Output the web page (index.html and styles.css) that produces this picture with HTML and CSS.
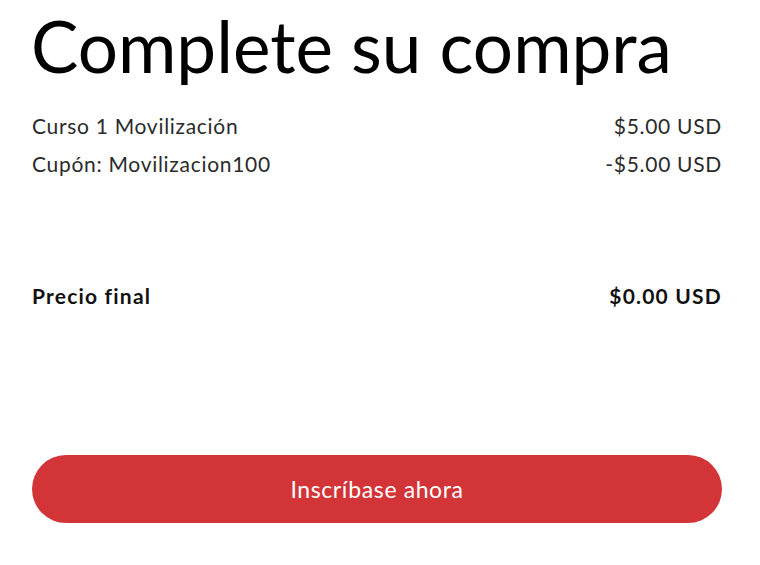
FILE: index.html
```html
<!DOCTYPE html>
<html lang="es">
<head>
<meta charset="utf-8">
<link rel="stylesheet" href="styles.css">
</head>
<body>
<main class="checkout">
  <h1 class="title">Complete su compra</h1>
  <div class="lines">
    <div class="row"><span>Curso 1 Movilización</span><span>$5.00 USD</span></div>
    <div class="row"><span>Cupón: Movilizacion100</span><span>-$5.00 USD</span></div>
  </div>
  <div class="row total"><span>Precio final</span><span>$0.00 USD</span></div>
  <button class="cta">Inscríbase ahora</button>
</main>
</body>
</html>
```
FILE: styles.css
```css
html, body {
  margin: 0;
  padding: 0;
  background: #ffffff;
}
.checkout {
  padding: 0 38px 0 32px;
  font-family: "Lato", "Noto Sans", sans-serif;
}
.title {
  margin: 0;
  padding-top: 8px;
  font-family: "Lato", sans-serif;
  font-weight: 400;
  font-size: 71px;
  line-height: 76px;
  color: #000;
  margin-left: -1px;
}
.lines {
  margin-top: 30px;
  display: flex;
  flex-direction: column;
  gap: 14px;
}
.row {
  display: flex;
  justify-content: space-between;
  font-size: 21px;
  line-height: 24px;
  letter-spacing: 0.7px;
  color: #2b2b2b;
}
.total {
  margin-top: 108px;
  font-weight: 700;
  color: #111;
  letter-spacing: 1.2px;
}
.cta {
  display: block;
  width: 100%;
  margin-top: 147px;
  height: 68px;
  border: none;
  border-radius: 34px;
  background: #d33438;
  color: #fff;
  font-family: "Lato", sans-serif;
  font-size: 23px;
  letter-spacing: 0.6px;
}
```
